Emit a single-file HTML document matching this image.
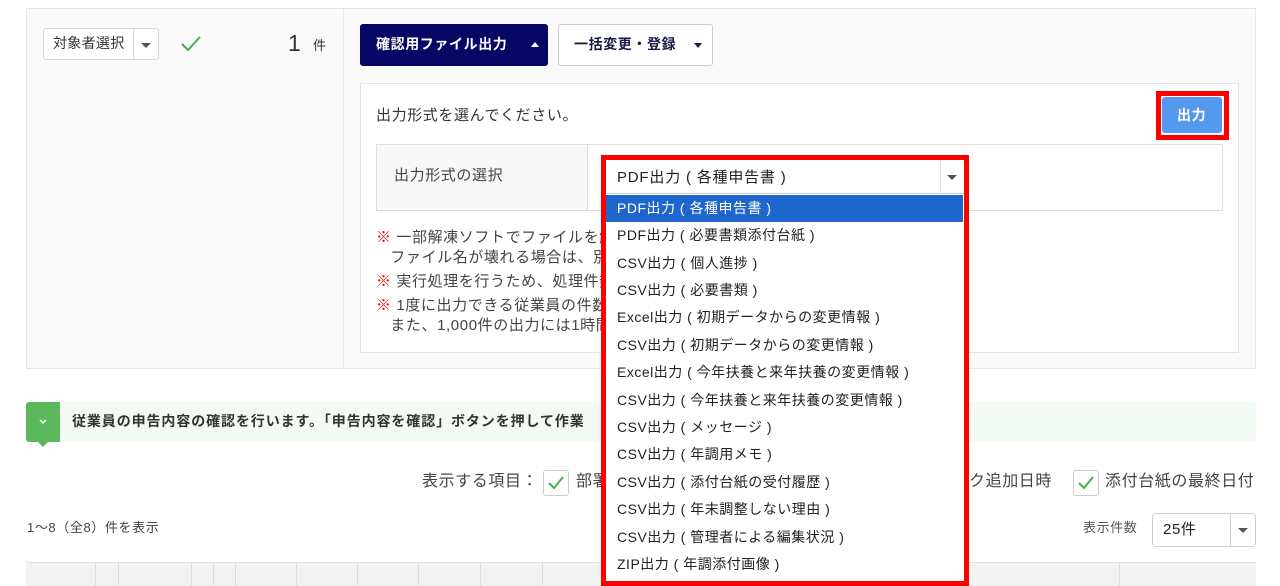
<!DOCTYPE html><html><head><meta charset="utf-8"><style>
*{box-sizing:border-box;margin:0;padding:0}
body{width:1280px;height:586px;overflow:hidden;background:#fff;font-family:"Liberation Sans","Noto Sans CJK JP",sans-serif;color:#333;font-size:14px;position:relative;letter-spacing:0.6px}
.a{position:absolute}
.t{position:absolute;white-space:nowrap;line-height:1}
.caret{width:0;height:0;border-left:5px solid transparent;border-right:5px solid transparent;border-top:5px solid #555;position:absolute}
.opt{position:absolute;left:606px;width:357px;height:27px;line-height:27px;padding-left:11px;font-size:14px;color:#222;white-space:nowrap;letter-spacing:0.5px;overflow:hidden}
</style></head><body>
<div class="a" style="left:26px;top:8px;width:1230px;height:361px;background:#fafafa;border:1px solid #e6e6e6"></div>
<div class="a" style="left:343px;top:9px;width:1px;height:359px;background:#ececec"></div>
<div class="a" style="left:43px;top:28px;width:116px;height:32px;background:#fff;border:1px solid #d6d6d6;border-radius:3px"></div>
<div class="a" style="left:133px;top:29px;width:1px;height:30px;background:#d6d6d6"></div>
<div class="t" style="left:53px;top:36px;font-size:14px;letter-spacing:0.3px">対象者選択</div>
<div class="caret" style="left:141px;top:43px"></div>
<svg class="a" style="left:180px;top:35px" width="22" height="18"><path d="M2 9 L8 15 L20 2" fill="none" stroke="#4cae4c" stroke-width="2"/></svg>
<div class="t" style="left:288px;top:32px;font-size:23px;color:#333">1</div>
<div class="t" style="left:313px;top:39px;font-size:13px">件</div>
<div class="a" style="left:360px;top:24px;width:188px;height:42px;background:#070766;border-radius:3px"></div>
<div class="t" style="left:376px;top:37px;color:#fff;font-weight:bold;font-size:14px">確認用ファイル出力</div>
<div class="a" style="left:531px;top:42px;width:0;height:0;border-left:4px solid transparent;border-right:4px solid transparent;border-bottom:5px solid #fff"></div>
<div class="a" style="left:558px;top:24px;width:155px;height:42px;background:#fff;border:1px solid #ccc;border-radius:3px"></div>
<div class="t" style="left:574px;top:37px;color:#1a1a4a;font-weight:bold;font-size:14px">一括変更・登録</div>
<div class="a" style="left:694px;top:43px;width:0;height:0;border-left:4px solid transparent;border-right:4px solid transparent;border-top:5px solid #1a1a4a"></div>
<div class="a" style="left:360px;top:83px;width:879px;height:270px;background:#fff;border:1px solid #e3e3e3"></div>
<div class="t" style="left:376px;top:108px;font-size:15px">出力形式を選んでください。</div>
<div class="a" style="left:1156px;top:91px;width:73px;height:49px;border:5px solid #f00"></div>
<div class="a" style="left:1162px;top:97px;width:60px;height:36px;background:#5599ee;border-radius:3px"></div>
<div class="t" style="left:1177px;top:108px;color:#fff;font-weight:bold;font-size:14px">出力</div>
<div class="a" style="left:376px;top:144px;width:847px;height:67px;border:1px solid #ddd;background:#fff"></div>
<div class="a" style="left:377px;top:145px;width:211px;height:65px;background:#f8f8f8;border-right:1px solid #ddd"></div>
<div class="t" style="left:394px;top:168px;color:#444;font-size:15px">出力形式の選択</div>
<div class="t" style="left:376px;top:228px;line-height:20px;color:#444;font-size:15px"><span style="color:#e00">※</span> 一部解凍ソフトでファイルを解凍<br>&nbsp;&nbsp;&nbsp;ファイル名が壊れる場合は、別の</div>
<div class="t" style="left:376px;top:272px;line-height:20px;color:#444;font-size:15px"><span style="color:#e00">※</span> 実行処理を行うため、処理件数</div>
<div class="t" style="left:376px;top:296px;line-height:20px;color:#444;font-size:15px"><span style="color:#e00">※</span> 1度に出力できる従業員の件数は<br>&nbsp;&nbsp;&nbsp;また、1,000件の出力には1時間</div>
<div class="a" style="left:26px;top:402px;width:1230px;height:40px;background:#f3f9f3;border-radius:3px"></div>
<div class="a" style="left:26px;top:402px;width:34px;height:40px;background:#5cb85c;border-radius:3px 0 0 3px"></div>
<div class="a" style="left:38px;top:442px;width:0;height:0;border-left:5px solid transparent;border-right:5px solid transparent;border-top:5px solid #5cb85c"></div>
<svg class="a" style="left:38px;top:418px" width="10" height="8"><path d="M2 2 L5 5 L8 2" fill="none" stroke="#fff" stroke-width="1.5"/></svg>
<div class="t" style="left:72px;top:414px;font-weight:bold;color:#333;letter-spacing:0.9px">従業員の申告内容の確認を行います。「申告内容を確認」ボタンを押して作業</div>
<div class="t" style="left:422px;top:474px;font-size:16px;color:#444">表示する項目：</div>
<div class="a" style="left:543px;top:470px;width:26px;height:26px;border:1px solid #ccc;border-radius:3px;background:#fff"></div>
<svg class="a" style="left:547px;top:475px" width="18" height="16"><path d="M2 8 L7 13 L16 2" fill="none" stroke="#4cae4c" stroke-width="2"/></svg>
<div class="t" style="left:576px;top:474px;font-size:16px;color:#444">部署</div>
<div class="t" style="left:969px;top:474px;font-size:16px;color:#444">ク追加日時</div>
<div class="a" style="left:1073px;top:470px;width:26px;height:26px;border:1px solid #ccc;border-radius:3px;background:#fff"></div>
<svg class="a" style="left:1077px;top:475px" width="18" height="16"><path d="M2 8 L7 13 L16 2" fill="none" stroke="#4cae4c" stroke-width="2"/></svg>
<div class="t" style="left:1105px;top:474px;font-size:16px;color:#444">添付台紙の最終日付</div>
<div class="t" style="left:27px;top:521px;font-size:13px;color:#444">1〜8（全8）件を表示</div>
<div class="t" style="left:1083px;top:521px;font-size:13px;color:#555">表示件数</div>
<div class="a" style="left:1152px;top:513px;width:104px;height:34px;border:1px solid #d0d0d0;border-radius:4px;background:#fff"></div>
<div class="a" style="left:1230px;top:514px;width:1px;height:32px;background:#d0d0d0"></div>
<div class="t" style="left:1163px;top:522px;font-size:15px;color:#222">25件</div>
<div class="caret" style="left:1238px;top:528px"></div>
<div class="a" style="left:26px;top:562px;width:1230px;height:24px;background:#f2f2f2;border-top:1px solid #e3e3e3"></div>
<div class="a" style="left:95px;top:562px;width:1px;height:24px;background:#ddd"></div>
<div class="a" style="left:118px;top:562px;width:1px;height:24px;background:#ddd"></div>
<div class="a" style="left:191px;top:562px;width:1px;height:24px;background:#ddd"></div>
<div class="a" style="left:213px;top:562px;width:1px;height:24px;background:#ddd"></div>
<div class="a" style="left:235px;top:562px;width:1px;height:24px;background:#ddd"></div>
<div class="a" style="left:296px;top:562px;width:1px;height:24px;background:#ddd"></div>
<div class="a" style="left:357px;top:562px;width:1px;height:24px;background:#ddd"></div>
<div class="a" style="left:418px;top:562px;width:1px;height:24px;background:#ddd"></div>
<div class="a" style="left:480px;top:562px;width:1px;height:24px;background:#ddd"></div>
<div class="a" style="left:542px;top:562px;width:1px;height:24px;background:#ddd"></div>
<div class="a" style="left:1119px;top:562px;width:1px;height:24px;background:#ddd"></div>
<div class="a" style="left:601px;top:155px;width:368px;height:431px;border:5px solid #f00;border-bottom:none;background:#fff"></div>
<div class="a" style="left:601px;top:581px;width:368px;height:5px;background:#f00"></div>
<div class="a" style="left:606px;top:160px;width:358px;height:34px;border-bottom:1px solid #ccc;background:#fff"></div>
<div class="a" style="left:940px;top:160px;width:1px;height:34px;background:#ddd"></div>
<div class="t" style="left:617px;top:170px;font-size:15px;color:#222;letter-spacing:0.8px">PDF出力 ( 各種申告書 )</div>
<div class="caret" style="left:947px;top:175px"></div>
<div class="opt" style="top:195px;background:#1e66cc;color:#fff">PDF出力 ( 各種申告書 )</div>
<div class="opt" style="top:222px">PDF出力 ( 必要書類添付台紙 )</div>
<div class="opt" style="top:250px">CSV出力 ( 個人進捗 )</div>
<div class="opt" style="top:277px">CSV出力 ( 必要書類 )</div>
<div class="opt" style="top:304px">Excel出力 ( 初期データからの変更情報 )</div>
<div class="opt" style="top:332px">CSV出力 ( 初期データからの変更情報 )</div>
<div class="opt" style="top:359px">Excel出力 ( 今年扶養と来年扶養の変更情報 )</div>
<div class="opt" style="top:387px">CSV出力 ( 今年扶養と来年扶養の変更情報 )</div>
<div class="opt" style="top:414px">CSV出力 ( メッセージ )</div>
<div class="opt" style="top:441px">CSV出力 ( 年調用メモ )</div>
<div class="opt" style="top:469px">CSV出力 ( 添付台紙の受付履歴 )</div>
<div class="opt" style="top:496px">CSV出力 ( 年末調整しない理由 )</div>
<div class="opt" style="top:524px">CSV出力 ( 管理者による編集状況 )</div>
<div class="opt" style="top:551px">ZIP出力 ( 年調添付画像 )</div>
</body></html>
